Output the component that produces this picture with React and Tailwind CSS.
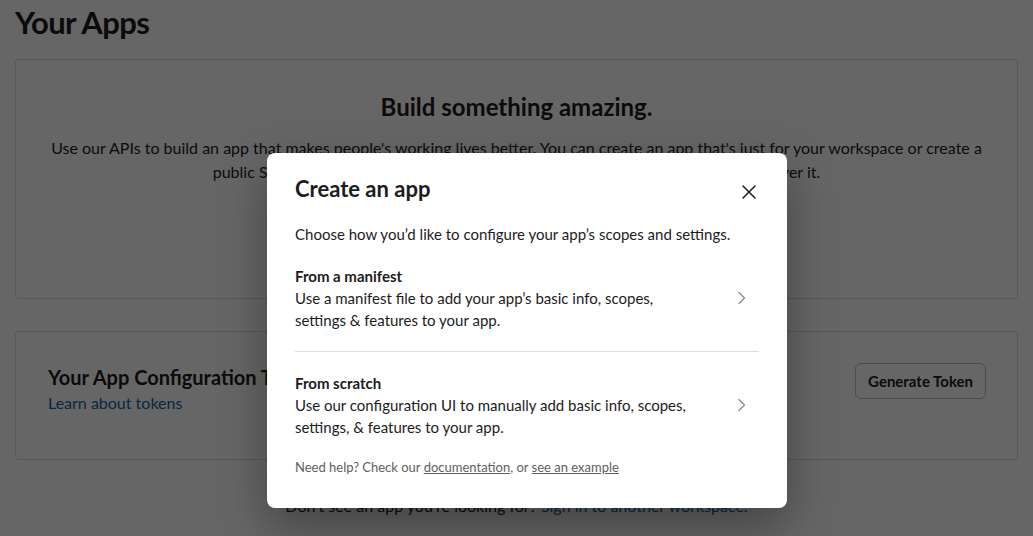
import React from 'react';

const options = [
  {
    id: 'manifest',
    title: 'From a manifest',
    description: ['Use a manifest file to add your app’s basic info, scopes,', 'settings & features to your app.'],
  },
  {
    id: 'scratch',
    title: 'From scratch',
    description: ['Use our configuration UI to manually add basic info, scopes,', 'settings, & features to your app.'],
  },
];

const Chevron = () => (
  <svg width="10" height="14" viewBox="0 0 10 14" fill="none" className="shrink-0">
    <path d="M2 1.5 L7.5 7 L2 12.5" stroke="#8d8d8d" strokeWidth="1.4" strokeLinecap="round" strokeLinejoin="round" />
  </svg>
);

const CloseIcon = () => (
  <svg width="14" height="14" viewBox="0 0 14 14" fill="none">
    <path d="M1 1 L13 13 M13 1 L1 13" stroke="#1d1c1d" strokeWidth="1.5" strokeLinecap="round" />
  </svg>
);

const App = () => {
  return (
    <div className="relative h-[536px] w-[1033px] overflow-hidden bg-white text-[#1d1c1d]" style={{ fontFamily: 'Lato, "Noto Sans", sans-serif' }}>
      {/* page behind the modal */}
      <div className="px-[15px]">
        <h1 className="text-[31px] font-bold leading-[44px] tracking-[-0.6px]">Your Apps</h1>

        <section className="mt-[15px] flex h-[240px] flex-col items-center rounded border border-[#dddddd] px-8 pt-[31px] text-center">
          <h2 className="text-[24px] font-bold leading-[32px]">Build something amazing.</h2>
          <p className="mt-[13px] text-[16px] leading-[24px]">
            Use our APIs to build an app that makes people's working lives better. You can create an app that's just for your workspace or create a
            <br />
            public Slack app to list in the Slack Marketplace, where anyone on Slack can discover it.
          </p>
        </section>

        <section className="mt-[32px] flex h-[129px] items-start justify-between rounded border border-[#dddddd] px-8 pt-[31px]">
          <div>
            <h3 className="text-[20px] font-bold leading-[28px]">Your App Configuration Tokens</h3>
            <a className="text-[16px] leading-[22px] text-[#1264a3]">Learn about tokens</a>
          </div>
          <button className="mr-[-1px] h-[36px] rounded-[6px] border border-[#bbbbbb] px-3 text-[15px] font-bold">Generate Token</button>
        </section>

        <p className="mt-[34px] text-center text-[16px] leading-[24px]">
          Don't see an app you're looking for? <a className="text-[#1264a3]">Sign in to another workspace.</a>
        </p>
      </div>

      {/* overlay */}
      <div className="absolute inset-0 bg-black/60" />

      {/* modal */}
      <div className="absolute left-[267px] top-[153px] w-[520px] rounded-[8px] bg-white px-[28px] pb-[32px] pt-[21px] shadow-[0_18px_48px_0_rgba(0,0,0,0.35)]">
        <div className="flex items-center justify-between">
          <h2 className="text-[22px] font-bold leading-[30px]">Create an app</h2>
          <button className="-mr-[2px] mt-[6px] flex h-[24px] w-[24px] items-center justify-center">
            <CloseIcon />
          </button>
        </div>

        <p className="mt-[19px] text-[15px] leading-[22px]">Choose how you’d like to configure your app’s scopes and settings.</p>

        <div className="mt-[20px]">
          {options.map((opt, i) => (
            <div key={opt.id}>
              {i > 0 && <div className="my-[20px] h-px bg-[#dddddd]" />}
              <div className="flex items-center justify-between pr-[12px]">
                <div>
                  <div className="text-[15px] font-bold leading-[22px]">{opt.title}</div>
                  {opt.description.map((line) => (
                    <div key={line} className="text-[15px] leading-[22px]">{line}</div>
                  ))}
                </div>
                <Chevron />
              </div>
            </div>
          ))}
        </div>

        <p className="mt-[20px] text-[13px] leading-[18px] text-[#616061]">
          Need help? Check our <a className="underline">documentation</a>, or <a className="underline">see an example</a>
        </p>
      </div>
    </div>
  );
};

export default App;
